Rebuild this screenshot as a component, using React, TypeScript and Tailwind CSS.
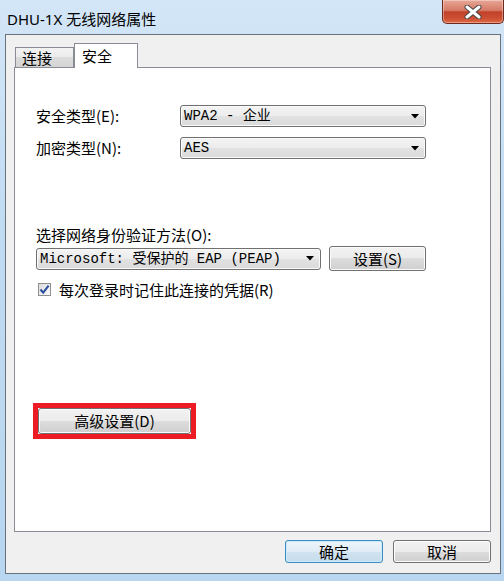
const cjk = "font-['Noto_Sans_CJK_SC',sans-serif]";
const mono = "font-['Liberation_Mono','Noto_Sans_CJK_SC',monospace]";

const btn =
  "flex items-center justify-center rounded-[3px] border border-[#707070] bg-[linear-gradient(#f2f2f2,#ebebeb_50%,#dddddd_50%,#cfcfcf)] shadow-[inset_0_0_0_1px_#fcfcfc] text-[15px] leading-[18px] text-black";

function Arrow() {
  return (
    <svg width="8" height="5" viewBox="0 0 8 5">
      <path d="M0 0 H8 L4 4.5 Z" fill="#000" />
    </svg>
  );
}

function Combo({ text, width }: { text: string; width: string }) {
  return (
    <div
      className={`${width} h-[22px] flex items-center justify-between pl-[3px] pr-[6px] rounded-[3px] border border-[#707070] bg-[linear-gradient(#f4f4f4,#ececec_50%,#e2e2e2_50%,#dadada)] shadow-[inset_0_0_0_1px_#fafafa]`}
    >
      <span className={`${mono} text-[14px] leading-[16px] text-black whitespace-pre`}>{text}</span>
      <Arrow />
    </div>
  );
}

export default function App() {
  return (
    <div className="w-[504px] h-[581px] overflow-hidden flex flex-col bg-[linear-gradient(#d3e6f7,#c0dbf2_40%,#b8d6f0)]">
      {/* title bar */}
      <div className="h-[34px] flex items-start justify-between">
        <div className={`pl-[7px] pt-[10px] text-[15px] leading-[18px] text-black font-['Noto_Sans','Noto_Sans_CJK_SC',sans-serif]`}>
          DHU-1X 无线网络属性
        </div>
        <div className="w-[62px] h-[24px] flex items-center justify-center rounded-b-[5px] border border-t-0 border-[#6e2a1c] bg-[linear-gradient(#e8a796,#d57a66_45%,#c2412a_52%,#cc4f33_80%,#e06a45)] shadow-[inset_0_0_0_1px_rgba(255,255,255,0.35)]">
          <svg width="18" height="14" viewBox="0 0 18 14">
            <path d="M3 2 L15 12 M15 2 L3 12" stroke="#474747" strokeWidth="5" strokeLinecap="round" />
            <path d="M3 2 L15 12 M15 2 L3 12" stroke="#ffffff" strokeWidth="3" strokeLinecap="round" />
          </svg>
        </div>
      </div>

      {/* client area */}
      <div className={`${cjk} ml-[5px] w-[496px] h-[540px] border border-[#68737e] bg-[#f0f0f0] pl-[8px] pt-[8px] flex flex-col`}>
        {/* tabs */}
        <div className="h-[24px] flex items-end pl-[1px]">
          <div className="w-[59px] h-[20px] border border-b-0 border-[#898c95] bg-[linear-gradient(#f3f3f3,#ebebeb_50%,#dcdcdc_50%,#d4d4d4)] pl-[6px] text-[15px] leading-[19px] text-black">
            连接
          </div>
          <div className="relative z-10 -mb-px w-[64px] h-[25px] border border-b-0 border-[#898c95] bg-white pl-[7px] pt-[2px] text-[15px] leading-[19px] text-black">
            安全
          </div>
        </div>

        {/* panel */}
        <div className="w-[477px] h-[465px] border border-[#898c95] bg-white pl-[21px] flex flex-col text-[15px] leading-[18px] text-black">
          <div className="mt-[37px] h-[22px] flex items-center">
            <span className="w-[144px]">安全类型(E):</span>
            <Combo text="WPA2 - 企业" width="w-[246px]" />
          </div>
          <div className="mt-[10px] h-[22px] flex items-center">
            <span className="w-[144px]">加密类型(N):</span>
            <Combo text="AES" width="w-[246px]" />
          </div>

          <div className="mt-[67px] h-[18px]">选择网络身份验证方法(O):</div>
          <div className="mt-[2px] h-[25px] flex items-center">
            <Combo text="Microsoft: 受保护的 EAP (PEAP)" width="w-[285px]" />
            <div className={`${btn} ml-[8px] w-[97px] h-[25px]`}>设置(S)</div>
          </div>

          <div className="mt-[10px] h-[17px] flex items-center pl-[2px] gap-[8px]">
            <div className="w-[13px] h-[13px] border border-[#8e8f8f] bg-[linear-gradient(135deg,#dcdcdc,#fbfbfb)] flex items-center justify-center">
              <svg width="11" height="11" viewBox="0 0 11 11">
                <path d="M1.5 5.5 L4.2 8.6 L9.6 1.6" fill="none" stroke="#2a4d9c" strokeWidth="2" />
              </svg>
            </div>
            <span>每次登录时记住此连接的凭据(R)</span>
          </div>

          <div className="mt-[105px] -ml-[3px] w-[163px] h-[36px] border-[5px] border-[#ed1c24]">
            <div className={`${btn} w-full h-full`}>高级设置(D)</div>
          </div>
        </div>

        {/* dialog buttons */}
        <div className="mt-[8px] w-[477px] flex justify-end gap-[10px]">
          <div className="w-[98px] h-[23px] flex items-center justify-center rounded-[3px] border border-[#3c8cc3] bg-[linear-gradient(#edf5fb,#e0ecf5_50%,#d1e3f0_50%,#c6dcec)] shadow-[inset_0_0_0_1px_#c9ecfc] text-[15px] leading-[18px] text-black">
            确定
          </div>
          <div className={`${btn} w-[98px] h-[23px]`}>取消</div>
        </div>
      </div>
    </div>
  );
}
